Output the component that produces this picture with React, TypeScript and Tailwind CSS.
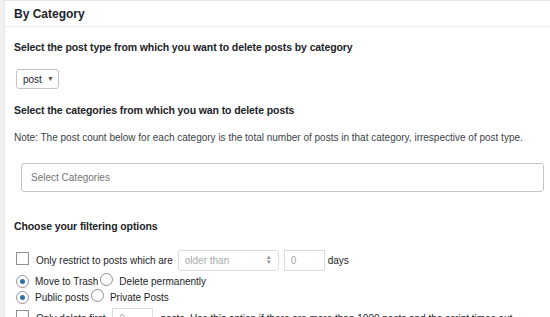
import React from 'react';

const font = {fontFamily: '"Liberation Sans", Arial, sans-serif'};

function Radio({checked}: {checked?: boolean}) {
    return (
        <span className="inline-flex w-[13px] h-[13px] rounded-full border border-[#8c8f94] bg-white items-center justify-center shrink-0">
            {checked && <span className="w-[5px] h-[5px] rounded-full bg-[#2271b1]" />}
        </span>
    );
}

function Checkbox() {
    return <span className="inline-block w-[13px] h-[13px] border border-[#8c8f94] bg-white shrink-0" />;
}

export default function App() {
    return (
        <div className="w-[550px] h-[317px] bg-[#f1f1f1] pl-[4px] overflow-hidden text-[#1d2327]" style={font}>
            <div className="bg-white border-l border-t border-[#e5e5e5] h-full">
                <div className="h-[26px] border-b border-[#eeeeee] flex items-center pl-[9px]">
                    <h2 className="text-[12px] font-bold">By Category</h2>
                </div>
                <div className="pl-[9px] pr-2 text-[10px]">
                    <p className="font-bold mt-[13px] leading-[14px] text-[10.5px] tracking-[-0.1px]">
                        Select the post type from which you want to delete posts by category
                    </p>
                    <div className="mt-[15px] ml-[2px] w-[43px] h-[20px] border border-[#c3c4c7] rounded-[3px] flex items-center pl-[6px] gap-[5px] text-[10px]">
                        <span>post</span>
                        <span className="text-[7px] text-[#555]">▼</span>
                    </div>
                    <p className="font-bold mt-[14px] leading-[14px] text-[10.5px] tracking-[-0.1px]">
                        Select the categories from which you wan to delete posts
                    </p>
                    <p className="mt-[14px] leading-[14px] text-[#3c434a] whitespace-nowrap">
                        Note: The post count below for each category is the total number of posts in that category, irrespective of post type.
                    </p>
                    <div className="mt-[18px] ml-[7px] w-[523px] h-[29px] border border-[#c3c4c7] rounded-[3px] flex items-center pl-[9px] text-[#757575]">
                        Select Categories
                    </div>
                    <p className="font-bold mt-[27px] leading-[14px] text-[10.5px] tracking-[-0.1px]">Choose your filtering options</p>
                    <div className="mt-[16px] flex items-center h-[22px] gap-[7px]">
                        <span className="ml-[2px]"><Checkbox /></span>
                        <span>Only restrict to posts which are</span>
                        <div className="ml-[-2px] w-[101px] h-[21px] border border-[#dcdcde] rounded-[3px] flex items-center justify-between px-[6px] text-[#a7aaad]">
                            <span>older than</span>
                            <span className="text-[6px] leading-[5px] flex flex-col text-[#8c8f94]">
                                <span>▲</span>
                                <span>▼</span>
                            </span>
                        </div>
                        <div className="ml-[-2px] w-[41px] h-[21px] border border-[#dcdcde] flex items-center pl-[6px] text-[#a7aaad]">0</div>
                        <span className="ml-[-4px]">days</span>
                    </div>
                    <div className="mt-[3px] flex items-center h-[15px] gap-[6px] ml-[2px]">
                        <Radio checked />
                        <span>Move to Trash</span>
                        <span className="ml-[-4px]"><Radio /></span>
                        <span>Delete permanently</span>
                    </div>
                    <div className="mt-[1px] flex items-center h-[15px] gap-[6px] ml-[2px]">
                        <Radio checked />
                        <span>Public posts</span>
                        <span className="ml-[-4px]"><Radio /></span>
                        <span>Private Posts</span>
                    </div>
                    <div className="mt-[2px] flex items-center h-[22px] gap-[7px]">
                        <span className="ml-[2px]"><Checkbox /></span>
                        <span>Only delete first</span>
                        <div className="w-[41px] h-[21px] border border-[#dcdcde] flex items-center pl-[6px] text-[#a7aaad]">0</div>
                        <span className="whitespace-nowrap">posts. Use this option if there are more than 1000 posts and the script times out.</span>
                    </div>
                </div>
            </div>
        </div>
    );
}
